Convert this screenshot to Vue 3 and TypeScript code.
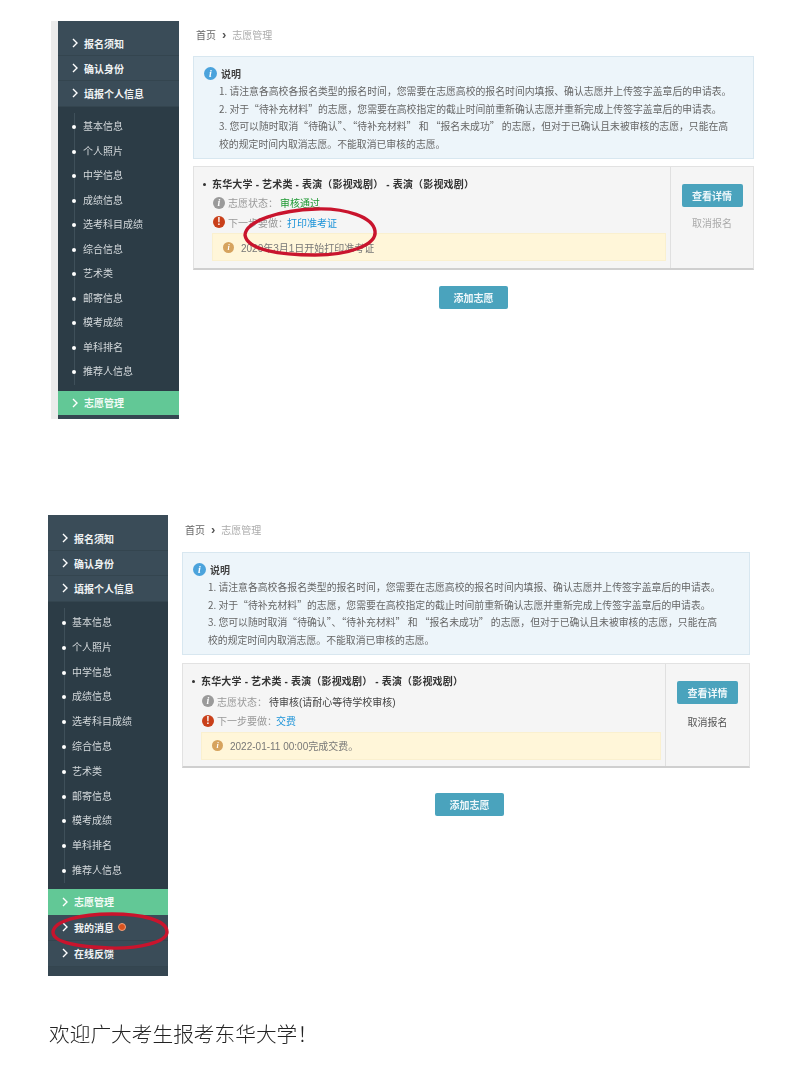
<script setup lang="ts">
interface Shot {
  key: string
  tail: string[]
  badge: string
  statusText: string
  statusClass: string
  nextText: string
  tipText: string
}

const topItems = ['报名须知', '确认身份', '填报个人信息']
const subItems = ['基本信息', '个人照片', '中学信息', '成绩信息', '选考科目成绩', '综合信息', '艺术类', '邮寄信息', '模考成绩', '单科排名', '推荐人信息']
const noticeLines = [
  '1. 请注意各高校各报名类型的报名时间，您需要在志愿高校的报名时间内填报、确认志愿并上传签字盖章后的申请表。',
  '2. 对于“待补充材料”的志愿，您需要在高校指定的截止时间前重新确认志愿并重新完成上传签字盖章后的申请表。',
  '3. 您可以随时取消“待确认”、“待补充材料” 和 “报名未成功” 的志愿，但对于已确认且未被审核的志愿，只能在高',
  '校的规定时间内取消志愿。不能取消已审核的志愿。',
]

const shots: Shot[] = [
  {
    key: 'a',
    tail: [],
    badge: '',
    statusText: '审核通过',
    statusClass: 'ok',
    nextText: '打印准考证',
    tipText: '2020年3月1日开始打印准考证',
  },
  {
    key: 'b',
    tail: ['我的消息', '在线反馈'],
    badge: '我的消息',
    statusText: '待审核(请耐心等待学校审核)',
    statusClass: 'wait',
    nextText: '交费',
    tipText: '2022-01-11 00:00完成交费。',
  },
]
</script>

<template>
  <div class="page">
    <section v-for="shot in shots" :key="shot.key" class="shot" :class="'shot-' + shot.key">
      <aside class="side">
        <div v-for="item in topItems" :key="item" class="top-row">
          <svg class="chev" width="6" height="10" viewBox="0 0 6 10"><polyline points="1,1 5,5 1,9" /></svg>
          <span>{{ item }}</span>
        </div>
        <ul class="subs">
          <li v-for="item in subItems" :key="item">{{ item }}</li>
        </ul>
        <div class="top-row current">
          <svg class="chev" width="6" height="10" viewBox="0 0 6 10"><polyline points="1,1 5,5 1,9" /></svg>
          <span>志愿管理</span>
        </div>
        <div v-for="item in shot.tail" :key="item" class="top-row tail">
          <svg class="chev" width="6" height="10" viewBox="0 0 6 10"><polyline points="1,1 5,5 1,9" /></svg>
          <span>{{ item }}</span>
          <i v-if="item === shot.badge" class="dot"></i>
        </div>
      </aside>

      <main class="main">
        <div class="crumb">首页<b>›</b><span>志愿管理</span></div>

        <div class="notice">
          <div class="notice-title"><span class="ico ico-blue">i</span>说明</div>
          <p v-for="line in noticeLines" :key="line">{{ line }}</p>
        </div>

        <div class="card">
          <div class="card-body">
            <div class="card-title"><em></em>东华大学 - 艺术类 - 表演（影视戏剧） - 表演（影视戏剧）</div>
            <div class="card-line">
              <span class="ico ico-gray">i</span><span class="label">志愿状态：</span>
              <span :class="shot.statusClass">{{ shot.statusText }}</span>
            </div>
            <div class="card-line">
              <span class="ico ico-red">!</span><span class="label">下一步要做：</span><span class="next">{{ shot.nextText }}</span>
            </div>
            <div class="tip"><span class="ico ico-orange">i</span>{{ shot.tipText }}</div>
          </div>
          <div class="card-side">
            <button class="btn" type="button">查看详情</button>
            <div class="cancel">取消报名</div>
          </div>
        </div>

        <div class="add-wrap"><button class="btn add" type="button">添加志愿</button></div>
      </main>

      <svg v-if="shot.key === 'a'" class="mark mark-a" width="140" height="56" viewBox="0 0 140 56">
        <path d="M5 30C6 16 40 5 76 4c30-1 57 8 59 22 2 14-26 24-60 24C40 50 7 45 5 30Z" />
      </svg>
      <svg v-else class="mark mark-b" width="120" height="44" viewBox="0 0 120 44">
        <path d="M3 21C4 10 30 3 62 3c30 0 55 6 55 18 0 10-28 17-58 16C30 36 3 32 3 21Z" />
      </svg>
    </section>

    <p class="closing">欢迎广大考生报考东华大学！</p>
  </div>
</template>

<style>
html, body {
  background: #fff;
}
</style>

<style scoped>
.page {
  width: 800px;
  height: 1069px;
  overflow: hidden;
  padding-top: 21px;
  box-sizing: border-box;
  font-family: "Liberation Sans", "Noto Sans CJK SC", sans-serif;
  font-size: 10px;
  color: #555;
}
.shot {
  position: relative;
  display: flex;
  align-items: flex-start;
  filter: blur(0.45px);
}
.shot-a {
  margin-left: 51px;
  width: 703px;
  height: 398px;
  border-left: 7px solid #ececec;
  box-sizing: border-box;
}
.shot-b {
  margin: 96px 0 0 48px;
  width: 702px;
  height: 461px;
}

.side {
  flex: none;
  width: 121px;
  height: 100%;
  background: #354651;
  color: #fff;
  overflow: hidden;
}
.shot-b .side {
  width: 120px;
}
.top-row {
  height: 25px;
  display: flex;
  align-items: center;
  padding-left: 14px;
  gap: 6px;
  background: #3a4c58;
  border-bottom: 1px solid #34454f;
  box-sizing: border-box;
  font-weight: 700;
  color: #f0f3f4;
}
.top-row:first-child {
  height: 35px;
  padding-top: 10px;
}
.shot-b .top-row:first-child {
  height: 36px;
  padding-top: 11px;
}
.top-row:nth-child(3) {
  height: 26px;
  padding-bottom: 1px;
}
.chev {
  flex: none;
}
.chev polyline {
  fill: none;
  stroke: #fff;
  stroke-width: 1.4;
}
.subs {
  position: relative;
  list-style: none;
  margin: 0;
  padding: 8px 0 6px 16px;
  background: #2c3c46;
}
.shot-b .subs {
  padding: 9px 0 5px 16px;
}
.subs::after {
  content: "";
  position: absolute;
  left: 16px;
  top: 6px;
  bottom: 6px;
  width: 1px;
  background: #3f505a;
}
.subs li {
  position: relative;
  height: 24.5px;
  line-height: 24.5px;
  padding-left: 9px;
  color: #d4d9dc;
}
.shot-b .subs li {
  height: 24.8px;
  line-height: 24.8px;
  padding-left: 8px;
}
.subs li::before {
  content: "";
  position: absolute;
  left: -2px;
  top: 10px;
  width: 4px;
  height: 4px;
  border-radius: 50%;
  background: #fff;
  z-index: 1;
}
.top-row.current {
  background: #62c896;
  border-bottom: 0;
  height: 24px;
  padding: 0 0 0 14px;
  color: #f4fbf7;
}
.shot-b .top-row.current {
  height: 26px;
}
.top-row.tail {
  height: 26px;
  padding: 0 0 0 14px;
}
.dot {
  width: 8px;
  height: 8px;
  margin-left: -2px;
  box-sizing: border-box;
  border-radius: 50%;
  background: #d9531e;
  border: 1px solid #f2a27e;
}

.main {
  flex: 1;
  min-width: 0;
  padding: 7px 0 0 14px;
}
.crumb {
  height: 14px;
  line-height: 14px;
  margin-left: 3px;
  margin-bottom: 14px;
  color: #666;
}
.shot-b .crumb {
  margin-bottom: 15px;
  padding-top: 1px;
}
.crumb b {
  margin: 0 6px 0 6px;
  font-size: 13px;
  color: #555;
}
.crumb span {
  color: #aaa;
}
.notice {
  height: 103px;
  padding: 8px 0 0 10px;
  box-sizing: border-box;
  background: #edf5fa;
  border: 1px solid #d8e7f0;
  overflow: hidden;
}
.notice-title {
  display: flex;
  align-items: center;
  gap: 4px;
  height: 16px;
  margin-bottom: 2px;
  font-weight: 700;
  color: #444;
}
.notice p {
  margin: 0 0 0 15px;
  height: 17.7px;
  line-height: 17.7px;
  white-space: nowrap;
  color: #666;
  font-family: "Noto Sans CJK SC", sans-serif;
  font-size: 9.85px;
}
.ico {
  flex: none;
  display: inline-block;
  width: 12px;
  height: 12px;
  border-radius: 50%;
  color: #fff;
  text-align: center;
  font: italic 700 10px/12px "Liberation Serif", serif;
}
.ico-blue {
  width: 13px;
  height: 13px;
  line-height: 13px;
  background: #4ba3dc;
}
.ico-gray {
  background: #9a9a9a;
}
.ico-red {
  background: #c9401a;
  font: 700 10px/12px "Liberation Sans", sans-serif;
}
.ico-orange {
  width: 11px;
  height: 11px;
  line-height: 11px;
  background: #d6a35e;
  font-size: 8px;
}

.card {
  display: flex;
  height: 104px;
  margin-top: 7px;
  box-sizing: border-box;
  background: #f5f5f5;
  border: 1px solid #e2e2e2;
  border-bottom: 2px solid #cfcfcf;
}
.shot-b .card {
  height: 105px;
  margin-top: 8px;
}
.card-body {
  flex: 1;
  min-width: 0;
  padding: 10px 4px 0 18px;
}
.card-title {
  position: relative;
  height: 16px;
  line-height: 15px;
  font-weight: 700;
  letter-spacing: 0.17px;
  color: #333;
}
.shot-b .card-title {
  height: 17.5px;
}
.card-title em {
  position: absolute;
  left: -9px;
  top: 6px;
  width: 3px;
  height: 3px;
  border-radius: 50%;
  background: #333;
}
.card-line {
  display: flex;
  align-items: center;
  height: 19.5px;
  margin-left: 1px;
}
.card-line .ico {
  margin-right: 3px;
}
.label {
  color: #999;
}
.ok {
  margin-left: 2px;
  color: #1f9a33;
}
.wait {
  margin-left: 2px;
  color: #444;
}
.next {
  margin-left: -1px;
  color: #1c93d8;
}
.tip {
  display: flex;
  align-items: center;
  gap: 7px;
  height: 28px;
  margin-top: 1px;
  padding-left: 10px;
  background: #fff6d9;
  border: 1px solid #faf0cf;
  box-sizing: border-box;
  color: #777;
}
.card-side {
  flex: none;
  width: 83px;
  box-sizing: border-box;
  border-left: 1px solid #e0e0e0;
  padding-top: 17px;
  text-align: center;
}
.shot-b .card-side {
  width: 84px;
}
.btn {
  display: block;
  width: 61px;
  height: 23px;
  margin: 0 auto;
  padding: 0;
  border: 0;
  border-radius: 2px;
  background: #4aa3bd;
  color: #eef7fa;
  font: 700 10px "Liberation Sans", "Noto Sans CJK SC", sans-serif;
}
.cancel {
  margin-top: 8px;
  color: #aaa;
}
.shot-b .cancel {
  margin-top: 10px;
  color: #555;
}
.add-wrap {
  margin-top: 16px;
  padding-left: 246px;
}
.shot-b .add-wrap {
  margin-top: 25px;
  padding-left: 253px;
}
.add {
  width: 69px;
  margin: 0;
}
.mark {
  position: absolute;
  overflow: visible;
}
.mark path {
  fill: none;
  stroke: #c9142d;
  stroke-width: 3.4;
}
.mark-a {
  left: 182px;
  top: 184px;
}
.mark-b {
  left: 2px;
  top: 396px;
}
.closing {
  margin: 42px 0 0 49px;
  font-family: "Noto Sans CJK SC", sans-serif;
  font-weight: 300;
  font-size: 20.7px;
  line-height: 30px;
  color: #222;
  filter: blur(0.3px);
}
</style>
